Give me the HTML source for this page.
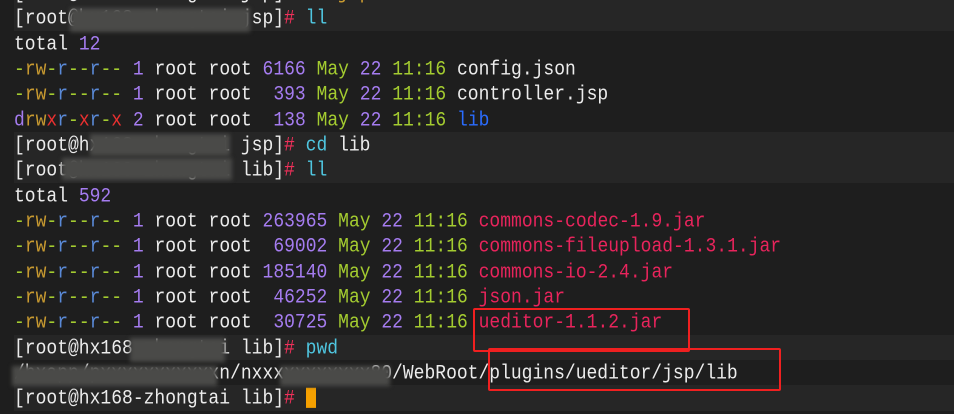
<!DOCTYPE html>
<html><head><meta charset="utf-8"><style>
html,body{margin:0;padding:0;width:954px;height:403px;overflow:hidden;background:#1e1e1e}
.l{position:absolute;left:0;width:954px;height:25.33px;line-height:25.33px;font-family:"Liberation Mono",monospace;font-size:18px;color:#ececec;white-space:pre;padding-left:14px;box-sizing:border-box}
.l span{display:inline-block}
.t{display:inline-block;transform:scaleY(1.12);position:relative;top:2px}
.p{background:#262626;left:14px;padding-left:0}
.h{color:#f0305a}.c{color:#4fc6e0}.n{color:#a57cf0}.g{color:#a4cc30}.o{color:#c89a30}.b{color:#5a8ad8}.f{color:#e8245c}.lb{color:#2a6cff}.pu{color:#a57cf0}.r{color:#ea3030}
.blur{position:absolute;background:#4a4a48;filter:blur(2px)}
.box{position:absolute;border:2px solid #f02020;border-radius:2px}
</style></head><body>
<div class="l p" style="top:-20px"><span class="t">[root@hx168-zhongtai jsp]# <span class="o">cd jsp/</span></span></div>
<div class="l p" style="top:5.3px"><span class="t">[root@hx168-zhongtai jsp]<span class="h">#</span> <span class="c">ll</span></span></div>
<div class="l" style="top:30.7px"><span class="t">total <span class="n">12</span></span></div>
<div class="l" style="top:56px"><span class="t"><span class="g">-</span><span class="o">rw</span><span class="g">-</span><span class="b">r</span><span class="g">--</span><span class="b">r</span><span class="g">--</span> <span class="n">1</span> root root <span class="n">6166</span> <span class="g">May</span> <span class="n">22</span> <span class="g">11:16</span> config.json</span></div>
<div class="l" style="top:81.3px"><span class="t"><span class="g">-</span><span class="o">rw</span><span class="g">-</span><span class="b">r</span><span class="g">--</span><span class="b">r</span><span class="g">--</span> <span class="n">1</span> root root  <span class="n">393</span> <span class="g">May</span> <span class="n">22</span> <span class="g">11:16</span> controller.jsp</span></div>
<div class="l" style="top:106.7px"><span class="t"><span class="pu">d</span><span class="o">rw</span><span class="r">x</span><span class="b">r</span><span class="g">-</span><span class="r">x</span><span class="b">r</span><span class="g">-</span><span class="r">x</span> <span class="n">2</span> root root  <span class="n">138</span> <span class="g">May</span> <span class="n">22</span> <span class="g">11:16</span> <span class="lb">lib</span></span></div>
<div class="l p" style="top:132px"><span class="t">[root@hx168-zhongtai jsp]<span class="h">#</span> <span class="c">cd</span> lib</span></div>
<div class="l p" style="top:157.3px"><span class="t">[root@hx168-zhongtai lib]<span class="h">#</span> <span class="c">ll</span></span></div>
<div class="l" style="top:182.7px"><span class="t">total <span class="n">592</span></span></div>
<div class="l" style="top:208px"><span class="t"><span class="g">-</span><span class="o">rw</span><span class="g">-</span><span class="b">r</span><span class="g">--</span><span class="b">r</span><span class="g">--</span> <span class="n">1</span> root root <span class="n">263965</span> <span class="g">May</span> <span class="n">22</span> <span class="g">11:16</span> <span class="f">commons-codec-1.9.jar</span></span></div>
<div class="l" style="top:233.3px"><span class="t"><span class="g">-</span><span class="o">rw</span><span class="g">-</span><span class="b">r</span><span class="g">--</span><span class="b">r</span><span class="g">--</span> <span class="n">1</span> root root  <span class="n">69002</span> <span class="g">May</span> <span class="n">22</span> <span class="g">11:16</span> <span class="f">commons-fileupload-1.3.1.jar</span></span></div>
<div class="l" style="top:258.7px"><span class="t"><span class="g">-</span><span class="o">rw</span><span class="g">-</span><span class="b">r</span><span class="g">--</span><span class="b">r</span><span class="g">--</span> <span class="n">1</span> root root <span class="n">185140</span> <span class="g">May</span> <span class="n">22</span> <span class="g">11:16</span> <span class="f">commons-io-2.4.jar</span></span></div>
<div class="l" style="top:284px"><span class="t"><span class="g">-</span><span class="o">rw</span><span class="g">-</span><span class="b">r</span><span class="g">--</span><span class="b">r</span><span class="g">--</span> <span class="n">1</span> root root  <span class="n">46252</span> <span class="g">May</span> <span class="n">22</span> <span class="g">11:16</span> <span class="f">json.jar</span></span></div>
<div class="l" style="top:309.3px"><span class="t"><span class="g">-</span><span class="o">rw</span><span class="g">-</span><span class="b">r</span><span class="g">--</span><span class="b">r</span><span class="g">--</span> <span class="n">1</span> root root  <span class="n">30725</span> <span class="g">May</span> <span class="n">22</span> <span class="g">11:16</span> <span class="f">ueditor-1.1.2.jar</span></span></div>
<div class="l p" style="top:334.7px"><span class="t">[root@hx168-zhongtai lib]<span class="h">#</span> <span class="c">pwd</span></span></div>
<div class="l" style="top:360px"><span class="t">/hxapp/pxxxxxxxxxxxn/nxxxxxxxxxxx80/WebRoot/plugins/ueditor/jsp/lib</span></div>
<div class="l p" style="top:385.3px"><span class="t">[root@hx168-zhongtai lib]<span class="h">#</span> <span style="display:inline-block;width:10px;height:18px;background:#f5a000;vertical-align:middle"></span></span></div>
<div class="blur" style="left:70px;top:8px;width:180px;height:24px"></div>
<div class="blur" style="left:90px;top:134px;width:140px;height:22px"></div>
<div class="blur" style="left:62px;top:158px;width:170px;height:22px"></div>
<div class="blur" style="left:130px;top:338px;width:95px;height:24px"></div>
<div class="blur" style="left:12px;top:366px;width:205px;height:20px"></div>
<div class="blur" style="left:280px;top:366px;width:110px;height:20px"></div>
<div class="box" style="left:473px;top:308px;width:213px;height:40px"></div>
<div class="box" style="left:488px;top:348px;width:289px;height:39px"></div>
</body></html>
